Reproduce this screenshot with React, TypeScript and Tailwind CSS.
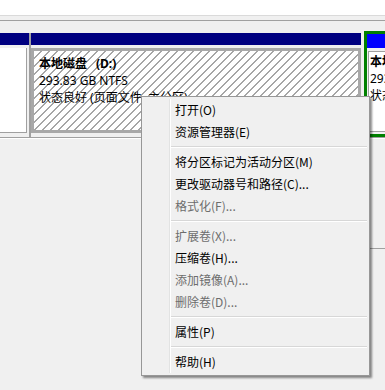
const font = "font-['Noto_Sans_CJK_SC','Noto_Sans',sans-serif]";
const diskFont = "font-['Noto_Sans','Noto_Sans_CJK_SC',sans-serif]";

type Item = { label: string; disabled?: boolean } | "sep";

const menu: Item[] = [
  { label: "打开(O)" },
  { label: "资源管理器(E)" },
  "sep",
  { label: "将分区标记为活动分区(M)" },
  { label: "更改驱动器号和路径(C)..." },
  { label: "格式化(F)...", disabled: true },
  "sep",
  { label: "扩展卷(X)...", disabled: true },
  { label: "压缩卷(H)..." },
  { label: "添加镜像(A)...", disabled: true },
  { label: "删除卷(D)...", disabled: true },
  "sep",
  { label: "属性(P)" },
  "sep",
  { label: "帮助(H)" },
];

function ContextMenu() {
  return (
    <div className="absolute left-[141px] top-[96px] w-[229px] border border-[#979797] bg-[#f0f0f0] py-[2px] shadow-[2px_2px_2px_rgba(0,0,0,0.45)]">
      {/* gutter line */}
      <div className="absolute left-[27px] top-[2px] bottom-[2px] w-[2px] border-l border-[#e2e3e3] bg-white" />
      {menu.map((it, i) =>
        it === "sep" ? (
          <div key={i} className="relative ml-[29px] mr-[2px] h-[8px] py-[3px]">
            <div className="h-px bg-[#d7d7d7]" />
            <div className="h-px bg-white" />
          </div>
        ) : (
          <div
            key={i}
            className={`relative flex h-[22px] items-center pl-[33px] text-[12px] leading-[22px] ${
              it.disabled ? "text-[#6d6d6d]" : "text-black"
            }`}
          >
            {it.label}
          </div>
        )
      )}
    </div>
  );
}

export default function App() {
  return (
    <div className={`relative h-[390px] w-[385px] overflow-hidden bg-[#f0f0f0] ${font}`}>
      <div className="h-[15px] bg-white" />
      <div className="h-px bg-[#dadada]" />
      <div className="h-[4px] bg-[#f0f0f0]" />
      <div className="h-px bg-[#a0a0a0]" />
      <div className="h-[10px] bg-[#f0f0f0]" />

      {/* partition row */}
      <div className="flex h-[106px]">
        {/* left partition */}
        <div className="flex w-[29px] shrink-0 flex-col pt-[2px]">
          <div className="h-[12px] bg-[#000080]" />
          <div className="flex-1 bg-[#f0f0f0] pt-[3px] pb-[4px] pr-[2px]">
            <div className="h-full border-r border-b border-[#a0a0a0] bg-white" />
          </div>
        </div>
        <div className="mt-[2px] w-[2px] shrink-0 bg-[#a0a0a0]" />

        {/* D: partition */}
        <div className="flex w-[330px] shrink-0 flex-col pt-[2px]">
          <div className="h-[12px] bg-[#000080]" />
          <div className="flex-1 bg-[#f0f0f0] pt-[3px] pb-[4px]">
            <div className={`h-full border-[3px] border-[#a8a8a8] bg-[repeating-linear-gradient(135deg,#ffffff_0px,#ffffff_4.6px,#a6a6a6_4.6px,#a6a6a6_5.66px)] pl-[5px] pt-[4px] text-[12px] leading-[17px] text-black ${diskFont}`}>
              <div className="font-bold">
                本地磁盘<span className="ml-[9px]">(D:)</span>
              </div>
              <div>293.83 GB NTFS</div>
              <div>状态良好 (页面文件, 主分区)</div>
            </div>
          </div>
        </div>
        <div className="w-[3px] shrink-0" />

        {/* selected partition */}
        <div className="flex w-[40px] shrink-0 flex-col border-[3px] border-[#008000] bg-[#f0f0f0]">
          <div className="h-[14px] bg-[#0000ff]" />
          <div className="flex-1 pt-[3px] pb-[2px] pl-[1px]">
            <div className={`h-full overflow-hidden whitespace-nowrap border border-[#a0a0a0] bg-white pl-[1px] pt-[1px] text-[12px] leading-[17px] text-black ${diskFont}`}>
              <div className="font-bold">本地</div>
              <div>293</div>
              <div>状态</div>
            </div>
          </div>
        </div>
      </div>

      <div className="h-px bg-[#a0a0a0]" />
      <div className="h-px bg-white" />
      <div className="flex h-[111px] justify-end">
        <div className="mt-[109px] h-px w-[90px] bg-[#a0a0a0]" />
      </div>

      <ContextMenu />
    </div>
  );
}
